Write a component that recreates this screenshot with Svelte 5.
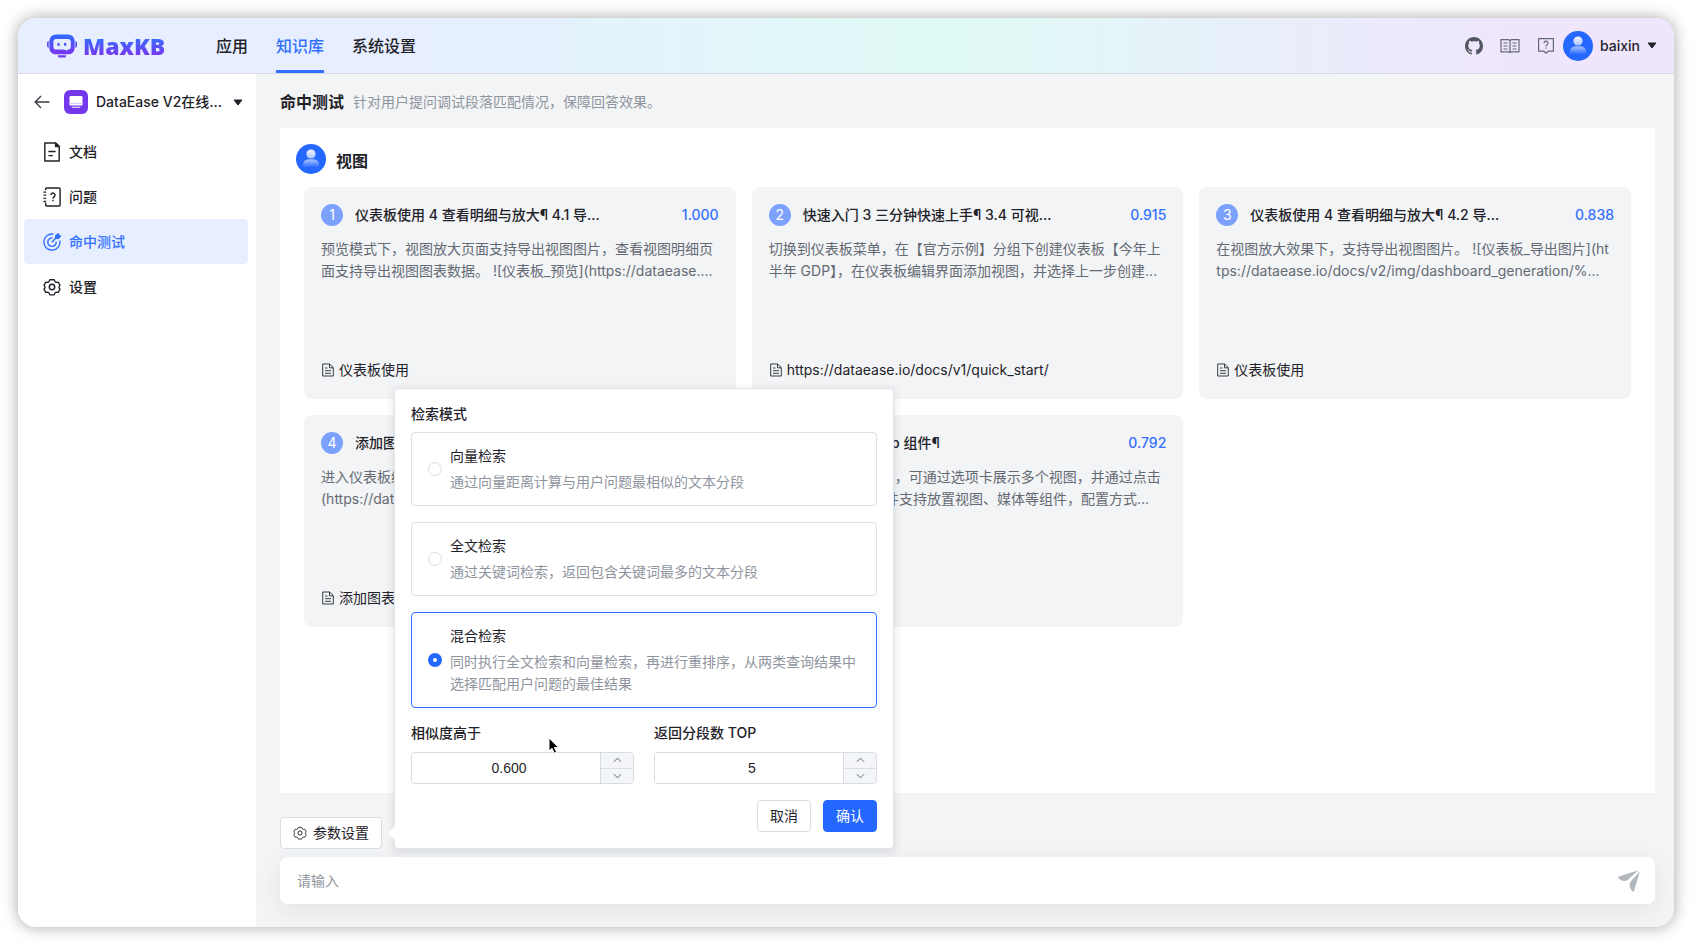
<script>
  const navs = ['应用', '知识库', '系统设置'];
  let activeNav = $state('知识库');

  const menus = [
    { name: '文档', icon: 'doc' },
    { name: '问题', icon: 'question' },
    { name: '命中测试', icon: 'target' },
    { name: '设置', icon: 'gear' }
  ];
  let activeMenu = $state('命中测试');

  const paragraphs = [
    {
      title: '仪表板使用 4 查看明细与放大¶ 4.1 导...',
      score: '1.000',
      content: '预览模式下，视图放大页面支持导出视图图片，查看视图明细页面支持导出视图图表数据。 ![仪表板_预览](https://dataease....',
      source: '仪表板使用'
    },
    {
      title: '快速入门 3 三分钟快速上手¶ 3.4 可视...',
      score: '0.915',
      content: '切换到仪表板菜单，在【官方示例】分组下创建仪表板【今年上半年 GDP】，在仪表板编辑界面添加视图，并选择上一步创建...',
      source: 'https://dataease.io/docs/v1/quick_start/'
    },
    {
      title: '仪表板使用 4 查看明细与放大¶ 4.2 导...',
      score: '0.838',
      content: '在视图放大效果下，支持导出视图图片。 ![仪表板_导出图片](https://dataease.io/docs/v2/img/dashboard_generation/%...',
      source: '仪表板使用'
    },
    {
      title: '添加图表',
      score: '0.805',
      content: '进入仪表板编辑界面，点击添加图表。 ![添加图表]\n(https://dataease.io/docs/v2/img/...',
      source: '添加图表'
    },
    {
      title: '添加图表 6 Tab 组件¶',
      score: '0.792',
      content: '添加选项卡组件之后，可通过选项卡展示多个视图，并通过点击标签切换。 Tab 组件支持放置视图、媒体等组件，配置方式...',
      source: '添加图表'
    }
  ];

  const modes = [
    { value: 'embedding', name: '向量检索', desc: '通过向量距离计算与用户问题最相似的文本分段' },
    { value: 'keywords', name: '全文检索', desc: '通过关键词检索，返回包含关键词最多的文本分段' },
    {
      value: 'blend',
      name: '混合检索',
      desc: '同时执行全文检索和向量检索，再进行重排序，从两类查询结果中选择匹配用户问题的最佳结果'
    }
  ];
  let mode = $state('blend');
  let similarity = $state(0.6);
  let topNumber = $state(5);
  let showSetting = $state(true);
  let question = $state('');

  function stepSimilarity(step) {
    similarity = Math.min(1, Math.max(0, similarity + step));
  }

  function stepTop(step) {
    topNumber = Math.min(100, Math.max(1, topNumber + step));
  }
</script>

{#snippet avatar(id)}
  <svg class="avatar" viewBox="0 0 30 30" aria-hidden="true">
    <defs>
      <linearGradient id={id} x1="0" y1="0" x2="0" y2="1">
        <stop offset="0" stop-color="#fff" stop-opacity=".95" />
        <stop offset="1" stop-color="#fff" stop-opacity=".6" />
      </linearGradient>
      <linearGradient id="{id}-body" x1="0" y1="0" x2="0" y2="1">
        <stop offset="0" stop-color="#fff" stop-opacity=".6" />
        <stop offset="1" stop-color="#fff" stop-opacity=".05" />
      </linearGradient>
    </defs>
    <circle cx="15" cy="15" r="15" fill="#2468ff" />
    <circle cx="15" cy="10" r="4.6" fill="url(#{id})" />
    <path d="M7 23v-2.500a5.200 5.200 0 0 1 5.200-5.200h5.600a5.200 5.200 0 0 1 5.200 5.200V23z" fill="url(#{id}-body)" />
  </svg>
{/snippet}

{#snippet gear()}
  <path d="M7.300 1.800h5.400l1.100 2.500 1.100.7 2.700-.300 2.200 4-1.300 1.700v1.200l1.300 1.700-2.200 4-2.700-.300-1.100.7-1.100 2.500H7.300l-1.100-2.500-1.100-.7-2.700.300-2.200-4 1.300-1.700v-1.200L.2 8.700l2.200-4 2.700.300 1.100-.7z" transform="translate(.9 .3) scale(.91)" />
  <circle cx="10" cy="10" r="3" />
{/snippet}

{#snippet caret()}
  <svg class="caret" viewBox="0 0 10 7" aria-hidden="true"><path d="M1 1h8L5 6z" fill="#1f2329" stroke="#1f2329" stroke-linejoin="round" /></svg>
{/snippet}

<div class="app">
  <header>
    <a class="logo" href="#home">
      <svg viewBox="0 0 30 24" aria-hidden="true">
        <defs>
          <linearGradient id="logo" x1="0" y1="0" x2="0" y2="1">
            <stop offset="0" stop-color="#2f6bff" />
            <stop offset="1" stop-color="#7a35f0" />
          </linearGradient>
        </defs>
        <path fill="url(#logo)" fill-rule="evenodd" d="M9 .4h12a6.600 6.600 0 0 1 6.600 6v8a6 6 0 0 1-6.600 5.800H9a6 6 0 0 1-6.600-5.800v-8A6.600 6.600 0 0 1 9 .4zm.2 4.600a2.800 2.800 0 0 0-2.800 2.800v5a2.800 2.800 0 0 0 2.800 2.800h7.300l3.700 1.200v-1.200h.8a2.800 2.800 0 0 0 2.800-2.800v-5A2.800 2.800 0 0 0 21 5z" />
        <path fill="#5450f6" d="M1.700 7v7C.6 13.700 0 13 0 11.600V9.400C0 8 .6 7.200 1.700 7zM28.300 7v7c1.100-.300 1.700-1 1.700-2.400V9.400c0-1.400-.6-2.200-1.700-2.400z" />
        <path fill="#7038f0" d="M11 21.300h8a2 2 0 0 1-2 2.300h-4a2 2 0 0 1-2-2.300z" />
        <rect x="10.300" y="8.800" width="2.400" height="3.200" rx="1.200" fill="#4d58f5" />
        <rect x="17" y="8.800" width="2.400" height="3.200" rx="1.200" fill="#4d58f5" />
      </svg>
      <span>MaxKB</span>
    </a>
    <nav class="top-menu">
      {#each navs as nav}
        <a href="#{nav}" class:active={nav === activeNav} onclick={() => (activeNav = nav)}>{nav}</a>
      {/each}
    </nav>
    <div class="tools">
      <a href="#github" aria-label="GitHub">
        <svg width="18" height="18" viewBox="0 0 16 16"><path fill="#51565f" d="M8 0C3.580 0 0 3.580 0 8c0 3.540 2.290 6.530 5.470 7.590.4.070.55-.17.55-.38 0-.19-.01-.82-.01-1.490-2.010.37-2.530-.49-2.690-.94-.09-.23-.48-.94-.82-1.130-.28-.15-.68-.52-.01-.53.63-.01 1.080.58 1.230.82.72 1.210 1.870.87 2.330.66.07-.52.28-.87.51-1.070-1.780-.2-3.640-.89-3.640-3.950 0-.87.31-1.590.82-2.150-.08-.2-.36-1.020.08-2.120 0 0 .67-.21 2.200.82.64-.18 1.320-.27 2-.27s1.360.09 2 .27c1.530-1.040 2.200-.82 2.200-.82.44 1.100.16 1.920.08 2.120.51.56.82 1.270.82 2.150 0 3.070-1.870 3.750-3.650 3.950.29.25.54.73.54 1.480 0 1.070-.01 1.930-.01 2.200 0 .21.15.46.55.38A8.010 8.010 0 0 0 16 8c0-4.420-3.580-8-8-8z" /></svg>
      </a>
      <a href="#wiki" aria-label="文档">
        <svg width="20" height="18" viewBox="0 0 20 18" fill="none" stroke="#646a73" stroke-width="1.200"><path d="M1 2.600h7.500L10 3.400l1.500-.8H19v12.200h-7.500l-1.500.8-1.500-.8H1zM10 3.400v12M3.500 6h4M3.500 9h4M3.500 12h4M12.500 6h4M12.500 9h4M12.500 12h4" /></svg>
      </a>
      <a href="#forum" aria-label="帮助">
        <svg width="18" height="18" viewBox="0 0 18 18" fill="none" stroke="#646a73" stroke-width="1.200"><path d="M1.600 1.600h14.800v12.600h-5.200L9 16.200l-2.200-2H1.600z" /><path d="M7 6.200a2 2 0 1 1 3 1.700c-.7.400-1 .8-1 1.500M9 10.500v1.300" /></svg>
      </a>
      <button class="user" type="button">
        {@render avatar('header-user')}
        <span>baixin</span>
        {@render caret()}
      </button>
    </div>
  </header>

  <div class="body">
    <aside>
      <div class="dataset">
        <button class="back" type="button" aria-label="返回">
          <svg width="16" height="14" viewBox="0 0 16 14" fill="none" stroke="#373b42" stroke-width="1.300"><path d="M7 1 1.200 7 7 13M1.200 7h14.300" /></svg>
        </button>
        <button class="switcher" type="button">
          <svg width="24" height="24" viewBox="0 0 24 24" aria-hidden="true">
            <rect width="24" height="24" rx="6" fill="#7338ea" />
            <rect x="5.500" y="6" width="13" height="9.500" rx="1.200" fill="#fff" />
            <path d="M5.500 13.600h13" stroke="#d5c3f9" />
            <path d="M7.800 17.300h8.400" stroke="#d5c3f9" stroke-width="1.400" />
          </svg>
          <span>DataEase V2在线...</span>
          {@render caret()}
        </button>
      </div>
      <nav class="side-menu">
        {#each menus as menu}
          <a href="#{menu.name}" class:active={menu.name === activeMenu} onclick={() => (activeMenu = menu.name)}>
            <svg width="18" height="20" viewBox="0 0 20 20" fill="none" stroke="currentColor" stroke-width="1.600" stroke-linejoin="round" aria-hidden="true">
              {#if menu.icon === 'doc'}
                <path d="M2 0h12l4 4v16H2z" />
                <path d="M14 0v4h4z" fill="currentColor" />
                <path d="M6 9.500h8M6 14h5" />
              {:else if menu.icon === 'question'}
                <path d="M3 2.500V1a1 1 0 0 1 1-1h14a1 1 0 0 1 1 1v18a1 1 0 0 1-1 1H4a1 1 0 0 1-1-1v-2.500" />
                <path d="M.5 4.500h3M.5 8h3M.5 11.500h3M.5 15h3" stroke-width="1.400" />
                <path d="M8.700 7.800a2.300 2.300 0 1 1 3.500 2c-.9.600-1.200 1-1.200 1.900M11 13v1.700" />
              {:else if menu.icon === 'target'}
                <path d="M11.500 1.200a9 9 0 1 0 7.300 7.300M10.500 5.500a4.700 4.700 0 1 0 4.200 4.200M9.800 10.200l4.600-4.600" />
                <path d="m14 5.800.3-3L17 .8l.4 2 2 .5-2.200 2.600z" fill="currentColor" />
              {:else}
                {@render gear()}
              {/if}
            </svg>
            {menu.name}
          </a>
        {/each}
      </nav>
    </aside>

    <main>
      <div class="heading">
        <h1>命中测试</h1>
        <p>针对用户提问调试段落匹配情况，保障回答效果。</p>
      </div>

      <section class="result">
        <div class="query">
          {@render avatar('query-user')}
          <h2>视图</h2>
        </div>
        <div class="cards">
          {#each paragraphs as item, index}
            <article>
              <div class="card-title">
                <span class="rank">{index + 1}</span>
                <h3>{item.title}</h3>
                <span class="score">{item.score}</span>
              </div>
              <p>{item.content}</p>
              <div class="source">
                <svg width="12" height="14" viewBox="0 0 12 14" fill="none" stroke="#373b42" aria-hidden="true"><path d="M.7 1h7l3.600 3.600V13H.7zM7.500 1v3.800h3.800M3 5h2.500M3 7.700h6M3 10.300h6" /></svg>
                <span>{item.source}</span>
              </div>
            </article>
          {/each}
        </div>
      </section>

      <div class="operate">
        <div class="setting">
          <button class="btn" type="button" onclick={() => (showSetting = !showSetting)}>
            <svg width="14" height="14" viewBox="0 0 20 20" fill="none" stroke="currentColor" stroke-width="1.400" stroke-linejoin="round" aria-hidden="true">{@render gear()}</svg>
            参数设置
          </button>

          {#if showSetting}
            <form class="popover" onsubmit={(e) => e.preventDefault()}>
              <fieldset>
                <legend>检索模式</legend>
                {#each modes as item}
                  <label class="mode" class:checked={mode === item.value}>
                    <input type="radio" name="mode" value={item.value} bind:group={mode} />
                    <span class="mode-text">
                      <span>{item.name}</span>
                      <small>{item.desc}</small>
                    </span>
                  </label>
                {/each}
              </fieldset>
              <div class="numbers">
                <div class="field">
                  <label for="similarity">相似度高于</label>
                  <div class="stepper">
                    <input id="similarity" type="text" value={similarity.toFixed(3)} onchange={(e) => (similarity = Number(e.currentTarget.value) || 0)} />
                    <div class="steps">
                      <button type="button" aria-label="增加" onclick={() => stepSimilarity(0.1)}><svg viewBox="0 0 10 6"><path d="m1 5 4-4 4 4" /></svg></button>
                      <button type="button" aria-label="减少" onclick={() => stepSimilarity(-0.1)}><svg viewBox="0 0 10 6"><path d="m1 1 4 4 4-4" /></svg></button>
                    </div>
                  </div>
                </div>
                <div class="field">
                  <label for="top-number">返回分段数 TOP</label>
                  <div class="stepper">
                    <input id="top-number" type="text" bind:value={topNumber} />
                    <div class="steps">
                      <button type="button" aria-label="增加" onclick={() => stepTop(1)}><svg viewBox="0 0 10 6"><path d="m1 5 4-4 4 4" /></svg></button>
                      <button type="button" aria-label="减少" onclick={() => stepTop(-1)}><svg viewBox="0 0 10 6"><path d="m1 1 4 4 4-4" /></svg></button>
                    </div>
                  </div>
                </div>
              </div>
              <div class="footer">
                <button class="btn" type="button" onclick={() => (showSetting = false)}>取消</button>
                <button class="btn primary" type="submit">确认</button>
              </div>
              <svg class="pointer" width="14" height="18" viewBox="0 0 14 18" aria-hidden="true"><path d="M1 1v13l3-2.700 2.200 4.900 2.400-1.100-2.200-4.700h4.200z" fill="#000" stroke="#fff" stroke-linejoin="round" /></svg>
            </form>
          {/if}
        </div>

        <div class="ask">
          <input type="text" aria-label="请输入" placeholder="请输入" bind:value={question} />
          <button type="button" aria-label="发送">
            <svg width="22" height="22" viewBox="0 0 22 22"><path fill="#b3b8bf" d="M20.200.2 1 6.600c-.9.300-1 1.200-.3 1.800 3 2.700 6.200 3.300 9.100 1.500zM21.800 1.400 16 21c-.3.900-1.100 1-1.700.3-3-3-3.300-6.800-1.700-9.700z" /></svg>
          </button>
        </div>
      </div>
    </main>
  </div>
</div>

<style>
  :global(body) {
    background: #fff;
  }

  .app {
    box-sizing: border-box;
    min-height: calc(100vh - 36px);
    margin: 18px;
    display: flex;
    flex-direction: column;
    border-radius: 18px;
    background: #f3f4f6;
    box-shadow: 0 0 16px rgba(0, 0, 0, 0.35);
    font-family: Inter, 'Noto Sans CJK SC', sans-serif;
    font-size: 14px;
    line-height: 22px;
    color: #1f2329;
  }

  .app :global(*) {
    box-sizing: border-box;
  }

  h1,
  h2,
  h3,
  p {
    margin: 0;
  }

  a {
    color: inherit;
    text-decoration: none;
  }

  button,
  input {
    font: inherit;
    color: inherit;
  }

  button {
    padding: 0;
    border: none;
    background: none;
    cursor: pointer;
  }

  svg {
    display: block;
    flex: none;
    overflow: visible;
  }

  header {
    display: flex;
    align-items: center;
    height: 56px;
    padding: 0 17px 0 29px;
    border-bottom: 1px solid #d8dbe3;
    border-radius: 18px 18px 0 0;
    background: linear-gradient(90deg, #e6eeff 24%, #dffaf5 56%, #efe6fd 90%);
  }

  .logo {
    display: flex;
    align-items: center;
    gap: 6px;
    width: 169px;
  }

  .logo svg {
    width: 30px;
    height: 24px;
  }

  .logo span {
    background: linear-gradient(180deg, #3370ff 20%, #7a35f0 85%);
    background-clip: text;
    color: transparent;
    font-family: 'Open Sans', sans-serif;
    font-size: 23px;
    font-weight: 800;
    line-height: 28px;
  }

  .top-menu {
    display: flex;
    align-self: stretch;
    gap: 28px;
    font-size: 16px;
    font-weight: 500;
  }

  .top-menu a {
    display: flex;
    align-items: center;
    border-top: 3px solid transparent;
    border-bottom: 3px solid transparent;
  }

  .top-menu a.active {
    border-bottom-color: #3370ff;
    color: #3370ff;
  }

  .tools {
    display: flex;
    align-items: center;
    gap: 17px;
    margin-left: auto;
  }

  .user {
    display: flex;
    align-items: center;
    gap: 7px;
    font-weight: 500;
  }

  .avatar {
    width: 30px;
    height: 30px;
  }

  .tools a:last-of-type {
    margin-right: -9px;
  }

  .caret {
    width: 10px;
    height: 7px;
  }

  .body {
    flex: 1;
    display: flex;
  }

  aside {
    flex: none;
    width: 238px;
    padding: 16px 8px 16px 6px;
    border-radius: 0 0 0 18px;
    background: #fff;
  }

  .dataset {
    display: flex;
    align-items: center;
    gap: 14px;
    padding: 0 5px 0 10px;
    margin-bottom: 15px;
  }

  .switcher {
    flex: 1;
    display: flex;
    align-items: center;
    gap: 8px;
    font-weight: 500;
  }

  .switcher .caret {
    margin-left: auto;
  }

  .side-menu a {
    display: flex;
    align-items: center;
    gap: 8px;
    height: 45px;
    padding-left: 19px;
    border-radius: 4px;
    font-weight: 500;
  }

  .side-menu a.active {
    background: #e6eeff;
    color: #3370ff;
  }

  main {
    flex: 1;
    min-width: 0;
    display: flex;
    flex-direction: column;
    padding: 16px 19px 23px 24px;
  }

  .heading {
    display: flex;
    align-items: center;
    gap: 9px;
    margin-bottom: 14px;
  }

  h1 {
    font-size: 16px;
    font-weight: 700;
    line-height: 24px;
  }

  .heading p {
    color: #8f959e;
  }

  .result {
    flex: 1;
    padding: 16px 24px 24px;
    background: #fff;
  }

  .query {
    display: flex;
    align-items: center;
    gap: 10px;
    margin: 0 0 13px -8px;
  }

  h2 {
    padding-top: 4px;
    font-size: 16px;
    font-weight: 700;
    line-height: 24px;
  }

  .cards {
    display: grid;
    grid-template-columns: repeat(3, 1fr);
    gap: 16px;
  }

  article {
    display: flex;
    flex-direction: column;
    min-width: 0;
    min-height: 212px;
    padding: 17px;
    border-radius: 8px;
    background: #f3f4f6;
  }

  .card-title {
    display: flex;
    align-items: center;
    gap: 12px;
    margin-bottom: 12px;
  }

  .rank {
    width: 22px;
    height: 22px;
    border-radius: 50%;
    background: #7ca1fd;
    color: #fff;
    text-align: center;
  }

  h3 {
    flex: 1;
    overflow: hidden;
    white-space: nowrap;
    font-size: 14px;
    font-weight: 500;
  }

  .score {
    color: #3370ff;
    font-weight: 500;
  }

  article p {
    padding-right: 3px;
    color: #646a73;
    white-space: pre-line;
    word-break: break-all;
  }

  .source {
    display: flex;
    align-items: center;
    gap: 5px;
    margin-top: auto;
    padding: 0 0 1px 1px;
  }

  .operate {
    padding-top: 24px;
  }

  .setting {
    position: relative;
    width: max-content;
    margin-bottom: 8px;
  }

  .btn {
    display: flex;
    align-items: center;
    justify-content: center;
    gap: 6px;
    min-width: 54px;
    height: 32px;
    padding: 0 12px;
    border: 1px solid #d9dce1;
    border-radius: 4px;
    background: #fff;
  }

  .btn.primary {
    border-color: #2468ff;
    background: #2468ff;
    color: #fff;
  }

  .popover {
    position: absolute;
    bottom: 0;
    left: calc(100% + 12px);
    z-index: 1;
    width: 500px;
    padding: 14px 16px 16px;
    border: 1px solid #e1e4ea;
    border-radius: 4px;
    background: #fff;
    box-shadow: 0 2px 8px rgba(31, 35, 41, 0.14);
  }

  .popover::before {
    content: '';
    position: absolute;
    bottom: 10px;
    left: -5px;
    width: 10px;
    height: 10px;
    background: #fff;
    transform: rotate(45deg);
  }

  fieldset {
    display: flex;
    flex-direction: column;
    gap: 16px;
    min-width: 0;
    margin: 0 0 14px;
    padding: 0;
    border: none;
  }

  legend {
    margin-bottom: 7px;
    padding: 0;
    font-weight: 500;
  }

  .mode {
    display: flex;
    align-items: center;
    gap: 8px;
    padding: 12px 16px;
    border: 1px solid #dee0e7;
    border-radius: 4px;
  }

  .mode.checked {
    border-color: #3370ff;
  }

  .mode input {
    flex: none;
    appearance: none;
    width: 14px;
    height: 14px;
    margin: 0;
    border: 1px solid #d9dce1;
    border-radius: 50%;
    background: #fff;
  }

  .mode input:checked {
    border: 5px solid #2468ff;
  }

  .mode-text {
    display: flex;
    flex-direction: column;
    gap: 4px;
  }

  small {
    font-size: 14px;
    color: #8f959e;
  }

  .numbers {
    display: flex;
    gap: 20px;
    margin-bottom: 16px;
  }

  .field {
    flex: 1;
    min-width: 0;
    display: flex;
    flex-direction: column;
    gap: 8px;
    font-weight: 500;
  }

  .stepper {
    display: flex;
    height: 32px;
    border: 1px solid #d9dce1;
    border-radius: 4px;
    overflow: hidden;
    font-weight: 400;
  }

  .stepper input {
    flex: 1;
    min-width: 0;
    padding: 0 8px 0 14px;
    border: none;
    outline: none;
    font-family: 'Liberation Sans', sans-serif;
    text-align: center;
  }

  .steps {
    display: flex;
    flex-direction: column;
    width: 33px;
    border-left: 1px solid #d9dce1;
    background: #f3f5f8;
  }

  .steps button {
    flex: 1;
    display: flex;
    align-items: center;
    justify-content: center;
  }

  .steps button + button {
    border-top: 1px solid #d9dce1;
  }

  .steps svg {
    width: 9px;
    height: 6px;
    fill: none;
    stroke: #51565f;
  }

  .footer {
    display: flex;
    justify-content: flex-end;
    gap: 12px;
  }

  .pointer {
    position: absolute;
    top: 348px;
    left: 153px;
  }

  .ask {
    display: flex;
    align-items: center;
    height: 47px;
    padding: 0 15px 0 17px;
    border-radius: 8px;
    background: #fff;
    box-shadow: 0 6px 24px rgba(31, 35, 41, 0.08);
  }

  .ask input {
    flex: 1;
    padding: 0;
    border: none;
    outline: none;
    background: none;
  }

  .ask input::placeholder {
    color: #8f959e;
  }
</style>
